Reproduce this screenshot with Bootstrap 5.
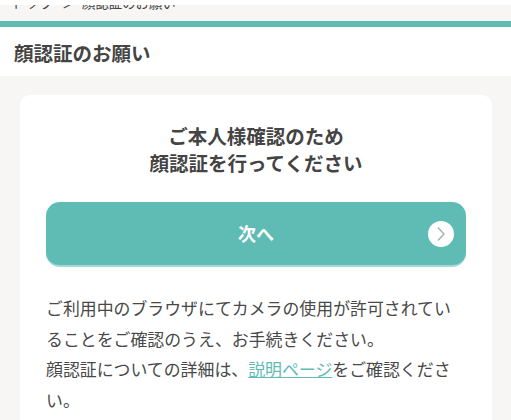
<!DOCTYPE html>
<html lang="ja">
<head>
<meta charset="utf-8">
<title>顔認証のお願い</title>
<link rel="stylesheet" href="https://cdn.jsdelivr.net/npm/bootstrap@5.3.0/dist/css/bootstrap.min.css">
<style>
html,body{height:420px;overflow:hidden}
body{background:#f7f6f4;color:#484848;font-family:"Noto Sans CJK JP","Liberation Sans",sans-serif}
.top-strip{height:5px;background:#fff}
.crumbs{height:16px;overflow:hidden;font-size:13.4px;line-height:14px;color:#444}
.crumbs-inner{margin-top:-10px;padding-left:11px}
.crumbs-inner span:first-child{letter-spacing:1px;width:51px}
.crumbs-inner span:nth-child(2){width:20px}
.teal-rule{height:6px;background:#5fbcb5}
.page-head{height:49px;background:#fff;padding-left:14px;font-size:19.5px;font-weight:700;line-height:51px;color:#444}
.sheet{margin:19px 19px 0 20px;background:#fff;border-radius:10px 10px 0 0;padding:27px 26px 0}
.sheet-title{font-size:19.5px;font-weight:700;line-height:27px;text-align:center;color:#444;margin:0 0 26px}
.next-btn{height:65px;background:#5fbcb5;border-radius:14px;border:0;border-bottom:2px solid #a5d8d3;color:#fff;font-size:18px;font-weight:700;position:relative;width:100%}
.next-btn:hover{background:#5fbcb5;color:#fff}
.next-arrow{position:absolute;right:12px;top:19px;width:26px;height:26px}
.sheet-text{font-size:16.9px;line-height:30.6px;margin:26px 0 0;color:#484848}
.sheet-text a{color:#5fbcb5}
</style>
</head>
<body class="d-flex flex-column">
<div class="top-strip"></div>
<div class="crumbs"><div class="crumbs-inner d-flex"><span>トップ</span><span>＞</span><span>顔認証のお願い</span></div></div>
<div class="teal-rule"></div>
<div class="page-head">顔認証のお願い</div>
<main class="sheet flex-grow-1">
<h1 class="sheet-title">ご本人様確認のため<br>顔認証を行ってください</h1>
<button type="button" class="btn next-btn d-block">次へ
<svg class="next-arrow" viewBox="0 0 26 26" aria-hidden="true"><circle cx="13" cy="13" r="13" fill="#fff"/><path d="M10 6.5 16 13 10 19.5" fill="none" stroke="#9db3b1" stroke-width="1.4"/></svg>
</button>
<p class="sheet-text">ご利用中のブラウザにてカメラの使用が許可されていることをご確認のうえ、お手続きください。<br>顔認証についての詳細は、<a href="#">説明ページ</a>をご確認ください。</p>
</main>
</body>
</html>
